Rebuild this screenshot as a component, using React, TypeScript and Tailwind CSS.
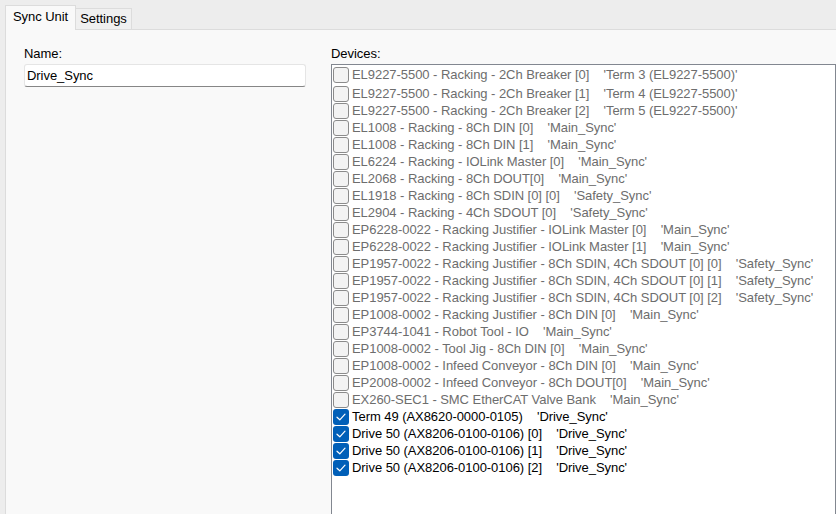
import React from "react";

type Device = { name: string; sync: string; checked?: boolean };

const DEVICES: Device[] = [
  { name: "EL9227-5500 - Racking - 2Ch Breaker [0]", sync: "'Term 3 (EL9227-5500)'" },
  { name: "EL9227-5500 - Racking - 2Ch Breaker [1]", sync: "'Term 4 (EL9227-5500)'" },
  { name: "EL9227-5500 - Racking - 2Ch Breaker [2]", sync: "'Term 5 (EL9227-5500)'" },
  { name: "EL1008 - Racking - 8Ch DIN [0]", sync: "'Main_Sync'" },
  { name: "EL1008 - Racking - 8Ch DIN [1]", sync: "'Main_Sync'" },
  { name: "EL6224 - Racking - IOLink Master [0]", sync: "'Main_Sync'" },
  { name: "EL2068 - Racking - 8Ch DOUT[0]", sync: "'Main_Sync'" },
  { name: "EL1918 - Racking - 8Ch SDIN [0] [0]", sync: "'Safety_Sync'" },
  { name: "EL2904 - Racking - 4Ch SDOUT [0]", sync: "'Safety_Sync'" },
  { name: "EP6228-0022 - Racking Justifier - IOLink Master [0]", sync: "'Main_Sync'" },
  { name: "EP6228-0022 - Racking Justifier - IOLink Master [1]", sync: "'Main_Sync'" },
  { name: "EP1957-0022 - Racking Justifier - 8Ch SDIN, 4Ch SDOUT [0] [0]", sync: "'Safety_Sync'" },
  { name: "EP1957-0022 - Racking Justifier - 8Ch SDIN, 4Ch SDOUT [0] [1]", sync: "'Safety_Sync'" },
  { name: "EP1957-0022 - Racking Justifier - 8Ch SDIN, 4Ch SDOUT [0] [2]", sync: "'Safety_Sync'" },
  { name: "EP1008-0002 - Racking Justifier - 8Ch DIN [0]", sync: "'Main_Sync'" },
  { name: "EP3744-1041 - Robot Tool - IO", sync: "'Main_Sync'" },
  { name: "EP1008-0002 - Tool Jig - 8Ch DIN [0]", sync: "'Main_Sync'" },
  { name: "EP1008-0002 - Infeed Conveyor - 8Ch DIN [0]", sync: "'Main_Sync'" },
  { name: "EP2008-0002 - Infeed Conveyor - 8Ch DOUT[0]", sync: "'Main_Sync'" },
  { name: "EX260-SEC1 - SMC EtherCAT Valve Bank", sync: "'Main_Sync'" },
  { name: "Term 49 (AX8620-0000-0105)", sync: "'Drive_Sync'", checked: true },
  { name: "Drive 50 (AX8206-0100-0106) [0]", sync: "'Drive_Sync'", checked: true },
  { name: "Drive 50 (AX8206-0100-0106) [1]", sync: "'Drive_Sync'", checked: true },
  { name: "Drive 50 (AX8206-0100-0106) [2]", sync: "'Drive_Sync'", checked: true },
];

function CheckBox({ checked }: { checked?: boolean }) {
  if (checked) {
    return (
      <span className="flex h-[16px] w-[16px] shrink-0 items-center justify-center rounded-[3px] bg-[#005fb8]">
        <svg width="10" height="8" viewBox="0 0 10 8" fill="none">
          <path d="M1 4.2 L3.8 6.8 L9 1.2" stroke="white" strokeWidth="1.2" strokeLinecap="round" strokeLinejoin="round" />
        </svg>
      </span>
    );
  }
  return <span className="h-[16px] w-[16px] shrink-0 rounded-[3px] border border-[#8b8b8b] bg-[#f3f3f3]" />;
}

export default function App() {
  return (
    <div
      className="h-[514px] w-[836px] overflow-hidden bg-[#ededed] text-[13px] tracking-[-0.05px] text-black"
      style={{ fontFamily: '"Liberation Sans", Arial, sans-serif' }}
    >
      {/* Tabs */}
      <div className="flex h-[29px] items-end pl-[5px]">
        <div className="relative -mb-px flex h-[25px] items-center border-x border-t border-[#dcdcdc] bg-[#f9f9f9] px-[7px] pb-[2px]">
          Sync Unit
        </div>
        <div className="flex h-[21px] items-center border-r border-t border-[#dcdcdc] bg-[#f0f0f0] px-[4px]">
          Settings
        </div>
      </div>

      {/* Panel */}
      <div className="ml-[5px] flex h-full gap-[25px] border-l border-t border-[#dcdcdc] bg-[#f9f9f9] pl-[18px] pt-[16px]">
        <div className="w-[282px] shrink-0">
          <div className="mb-[3px] h-[15px] leading-[15px]">Name:</div>
          <div className="flex h-[23px] items-center rounded-[3px] border border-[#e5e5e5] border-b-[#868686] bg-white pl-[2px]">
            Drive_Sync
          </div>
        </div>

        <div className="flex-1">
          <div className="mb-[3px] h-[15px] leading-[15px]">Devices:</div>
          <div className="h-[500px] border border-[#828790] bg-white pl-[1px] pt-[1px]">
            {DEVICES.map((d, i) => (
              <div key={i} className={`flex h-[17px] items-center whitespace-pre ${i === 1 ? "mt-[2px]" : ""}`}>
                <CheckBox checked={d.checked} />
                <span className={`ml-[3px] ${d.checked ? "text-black" : "text-[#6d6d6d]"}`}>
                  {d.name}
                  {"    "}
                  {d.sync}
                </span>
              </div>
            ))}
          </div>
        </div>
      </div>
    </div>
  );
}
